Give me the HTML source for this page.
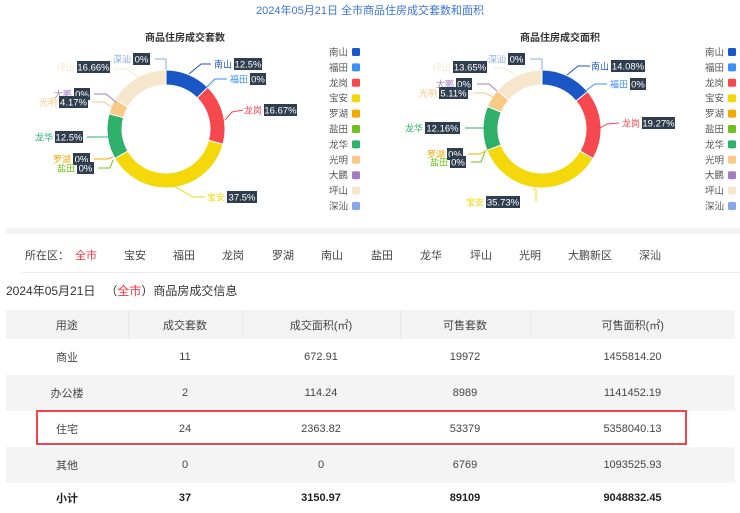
<!DOCTYPE html>
<html><head><meta charset="utf-8">
<style>
*{margin:0;padding:0;box-sizing:border-box}
body{width:740px;height:513px;background:#fff;font-family:"Liberation Sans","Noto Sans CJK SC",sans-serif;position:relative;overflow:hidden;color:#333}
.abs{position:absolute;white-space:nowrap}
#top{position:absolute;left:0;top:0;width:740px;height:225px}
.nav{font-size:11px;color:#444;top:247px}
table{position:absolute;left:6px;top:310px;width:729px;border-collapse:collapse;font-size:11px;color:#444;table-layout:fixed}
td{text-align:center;padding:0}
tr.h td{background:#f3f3f3;height:29px;border-left:1px solid #e6e6e6}
tr.h td:first-child{border-left:none}
tr.r td{height:36px}
tr.g td{background:#f4f4f4}
tr.b td{font-weight:bold;color:#222;height:30px}
</style></head><body>
<svg id="top" width="740" height="225" viewBox="0 0 740 225" font-family="Liberation Sans, Noto Sans CJK SC, sans-serif"></svg>
<div class="abs" style="left:6px;top:228px;width:734px;height:6px;background:#f3f3f3"></div>
<div class="abs nav" style="left:25px">所在区：</div>
<div class="abs nav" style="left:75px;color:#f5333f">全市</div>
<div class="abs nav" style="left:124px">宝安</div>
<div class="abs nav" style="left:173px">福田</div>
<div class="abs nav" style="left:222px">龙岗</div>
<div class="abs nav" style="left:272px">罗湖</div>
<div class="abs nav" style="left:321px">南山</div>
<div class="abs nav" style="left:371px">盐田</div>
<div class="abs nav" style="left:420px">龙华</div>
<div class="abs nav" style="left:470px">坪山</div>
<div class="abs nav" style="left:519px">光明</div>
<div class="abs nav" style="left:568px">大鹏新区</div>
<div class="abs nav" style="left:639px">深汕</div>
<div class="abs" style="left:22px;top:272px;width:718px;height:1px;background:#e8e8e8"></div>
<div class="abs" style="left:6px;top:282px;font-size:12px;color:#333">2024年05月21日 &nbsp;&nbsp;（<span style="color:#f5333f">全市</span>）商品房成交信息</div>
<table>
<colgroup><col style="width:122px"><col style="width:114px"><col style="width:158px"><col style="width:130px"><col></colgroup>
<tr class="h"><td>用途</td><td>成交套数</td><td>成交面积(㎡)</td><td>可售套数</td><td>可售面积(㎡)</td></tr>
<tr class="r"><td>商业</td><td>11</td><td>672.91</td><td>19972</td><td>1455814.20</td></tr>
<tr class="r g"><td>办公楼</td><td>2</td><td>114.24</td><td>8989</td><td>1141452.19</td></tr>
<tr class="r"><td>住宅</td><td>24</td><td>2363.82</td><td>53379</td><td>5358040.13</td></tr>
<tr class="r g"><td>其他</td><td>0</td><td>0</td><td>6769</td><td>1093525.93</td></tr>
<tr class="b"><td>小计</td><td>37</td><td>3150.97</td><td>89109</td><td>9048832.45</td></tr>
</table>
<div class="abs" style="left:36px;top:410px;width:651px;height:35px;border:2px solid #f0434a"></div>
<script>
var svg=document.getElementById('top');var h='';
var names=['南山','福田','龙岗','宝安','罗湖','盐田','龙华','光明','大鹏','坪山','深汕'];
var cols=['#1a56c4','#3d8ff5','#f5484f','#f5d80a','#f5a800','#6cc21a','#2fb06a','#f9c986','#a47ec0','#f5e6cc','#86a8e8'];
h+='<text x="370" y="14" font-size="11" fill="#3a74d8" text-anchor="middle">2024年05月21日 全市商品住房成交套数和面积</text>';
function donut(cx,cy,vals){var a=0,R=59,r=44;for(var i=0;i<vals.length;i++){if(!vals[i])continue;var a2=a+vals[i]/100*2*Math.PI;
var p=function(t,rr){return (cx+rr*Math.sin(t)).toFixed(2)+' '+(cy-rr*Math.cos(t)).toFixed(2)};var lg=(a2-a)>Math.PI?1:0;
h+='<path d="M'+p(a,R)+' A'+R+' '+R+' 0 '+lg+' 1 '+p(a2,R)+' L'+p(a2,r)+' A'+r+' '+r+' 0 '+lg+' 0 '+p(a,r)+'Z" fill="'+cols[i]+'" stroke="#fff" stroke-width="1"/>';a=a2;}}
function legend(tx,bx){for(var i=0;i<11;i++){var y=52+i*15.4;h+='<text x="'+(bx-4)+'" y="'+(y+3.5)+'" font-size="9.5" fill="#555" text-anchor="end">'+names[i]+'</text><rect x="'+bx+'" y="'+(y-4)+'" width="8" height="8" rx="1.5" fill="'+cols[i]+'"/>';}}
function label(i,tx,y,bx,bw,v,line){h+='<polyline points="'+line+'" fill="none" stroke="'+cols[i]+'" stroke-width="1"/>';
h+='<text x="'+(bx-2)+'" y="'+(y+3.5)+'" font-size="9" fill="'+cols[i]+'" text-anchor="end">'+names[i]+'</text>';
h+='<rect x="'+bx+'" y="'+(y-6)+'" width="'+bw+'" height="12" fill="#2f3e4e"/><text x="'+(bx+bw/2)+'" y="'+(y+3.5)+'" font-size="9.5" fill="#fff" text-anchor="middle">'+v+'</text>';}
donut(166,129,[12.5,0,16.67,37.5,0,0,12.5,4.17,0,16.66,0]);
h+='<text x="185" y="41" font-size="10" fill="#333" text-anchor="middle" font-weight="bold">商品住房成交套数</text>';
legend(331,352);
label(10,114,59,133,17,'0%','155,59 166,59 166,70');
label(0,214,64,234,28,'12.5%','211,64 201,64 189,74');
label(1,229,79,250,16,'0%','227,79 215,79 206,88');
label(2,245,110,264,33,'16.67%','243,110 232,112 225,120');
label(3,207,197,227,30,'37.5%','205,197 193,197 174,186');
label(9,58,67,77,33,'16.66%','114,69 126,69 138,77');
label(8,55,94,74,16,'0%','94,94 106,94 116,102');
label(7,40,102,59,29,'4.17%','92,102 104,102 112,107');
label(6,35,137,55,28,'12.5%','87,137 99,137 109,137');
label(4,52,159,73,17,'0%','94,159 107,159 113,157');
label(5,57,168,77,17,'0%','98,168 110,168 113,160');
donut(542,129,[14.08,0,19.27,35.73,0,0,12.16,5.11,0,13.65,0]);
h+='<text x="560" y="41" font-size="10" fill="#333" text-anchor="middle" font-weight="bold">商品住房成交面积</text>';
legend(707,728);
label(10,490,59,508,17,'0%','530,59 542,59 542,70');
label(0,592,66,611,34,'14.08%','590,66 578,66 567,75');
label(1,609,84,630,16,'0%','607,84 595,84 584,92');
label(2,621,123,642,33,'19.27%','619,123 607,124 600,128');
label(3,467,202,486,34,'35.73%','536,202 536,190 533,188');
label(9,435,67,453,34,'13.65%','493,68 505,68 516,75');
label(8,436,84,456,16,'0%','477,84 489,84 497,91');
label(7,417,93,439,29,'5.11%','473,93 485,93 493,97');
label(6,406,128,425,35,'12.16%','465,128 477,128 487,128');
label(4,427,154,447,16,'0%','468,154 480,154 487,150');
label(5,430,162,450,16,'0%','471,162 481,162 485,152');
svg.innerHTML=h;
</script>
</body></html>
